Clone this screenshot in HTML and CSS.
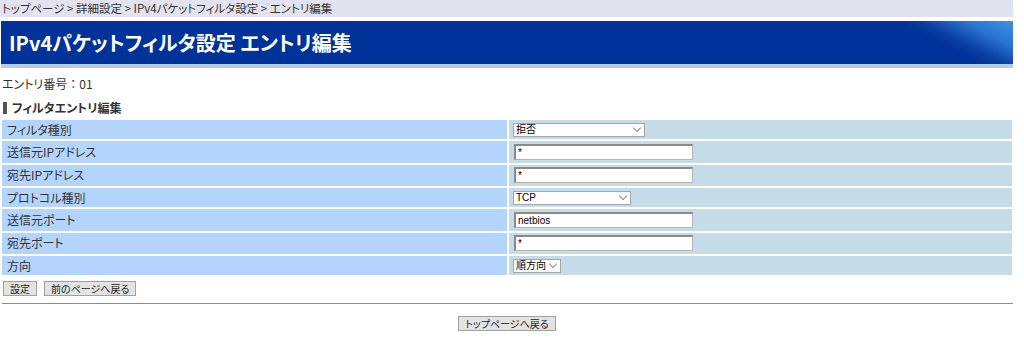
FILE: index.html
```html
<!DOCTYPE html>
<html lang="ja">
  <head>
    <meta charset="UTF-8">
    <title>IPv4パケットフィルタ設定 エントリ編集</title>
    <link rel="stylesheet" href="styles.css">
  </head>
  <body>
  <div class="page">
    <div class="breadcrumb">トップページ &gt; 詳細設定 &gt; IPv4パケットフィルタ設定 &gt; エントリ編集</div>
    <header class="title">
      <h1>IPv4パケットフィルタ設定 エントリ編集</h1>
    </header>

    <p class="entry-no">エントリ番号<span class="colon">：</span>01</p>
    <h2 class="section">フィルタエントリ編集</h2>

    <table class="form">
      <tr class="row-sel">
        <th>フィルタ種別</th>
        <td><span class="sel sel-wide"><select><option>拒否</option></select></span></td>
      </tr>
      <tr class="row-txt">
        <th>送信元IPアドレス</th>
        <td><input type="text" value="*"></td>
      </tr>
      <tr class="row-txt">
        <th>宛先IPアドレス</th>
        <td><input type="text" value="*"></td>
      </tr>
      <tr class="row-sel">
        <th>プロトコル種別</th>
        <td><span class="sel sel-mid"><select><option>TCP</option></select></span></td>
      </tr>
      <tr class="row-txt">
        <th>送信元ポート</th>
        <td><input type="text" value="netbios"></td>
      </tr>
      <tr class="row-txt">
        <th>宛先ポート</th>
        <td><input type="text" value="*"></td>
      </tr>
      <tr class="row-sel">
        <th>方向</th>
        <td><span class="sel sel-small"><select><option>順方向</option></select></span></td>
      </tr>
    </table>

    <div class="actions">
      <button class="btn">設定</button>
      <button class="btn">前のページへ戻る</button>
    </div>
    <hr class="rule">
    <div class="bottom">
      <button class="btn">トップページへ戻る</button>
    </div>
  </div>
  </body>
</html>
```

FILE: styles.css
```css
html, body {
  margin: 0;
  background: #fff;
}
body {
  font-family: "Noto Sans CJK JP", "Noto Sans", sans-serif;
  font-feature-settings: "palt";
  font-size: 12px;
  color: #333;
}
.page {
  width: 1014px;
}
.breadcrumb {
  width: 1013px;
  height: 17px;
  line-height: 17px;
  padding-left: 2px;
  box-sizing: border-box;
  background-color: #e3e3ef;
  font-size: 11.5px;
  color: #333;
}
.title {
  margin: 4px 0 0 1px;
  width: 1012px;
  height: 43px;
  background: linear-gradient(207deg, #3d93e8 0%, #2a74d2 4.5%, #0a3fa2 8.5%, #003399 10.5%);
  border-bottom: 4px solid #b6cde0;
}
.title h1 {
  margin: 0;
  padding-left: 8px;
  line-height: 43px;
  font-size: 20px;
  font-weight: 700;
  color: #fff;
}
.entry-no {
  margin: 9px 0 0 2px;
  line-height: 14px;
  font-size: 12px;
}
.colon {
  font-feature-settings: normal;
}
.section {
  margin: 11px 0 0 3px;
  padding-left: 5px;
  border-left: 4px solid #555;
  line-height: 12px;
  font-size: 12px;
  font-weight: 700;
  color: #333;
}
.form {
  margin-top: 4px;
  width: 1014px;
  border-collapse: separate;
  border-spacing: 2px;
}
.form th {
  width: 500px;
  padding: 0 0 0 5px;
  text-align: left;
  font-weight: 400;
  line-height: 14px;
  background-color: #b3d4fc;
}
.form td {
  padding: 0 0 0 4px;
  background-color: #c6dbe8;
}
.row-sel th,
.row-sel td {
  height: 19px;
}
.row-txt th,
.row-txt td {
  height: 21.5px;
}
.form input {
  display: block;
  box-sizing: border-box;
  width: 179px;
  height: 16px;
  margin-left: 1px;
  padding: 0 0 0 2px;
  border: 1px solid #b5b5b5;
  border-top: 2px solid #8a8a8a;
  border-left: 2px solid #8a8a8a;
  background: #fff;
  font-family: "Liberation Sans", sans-serif;
  font-size: 10px;
  color: #000;
}
.sel {
  position: relative;
  display: block;
  height: 14px;
}
.sel-wide {
  width: 132px;
}
.sel-mid {
  width: 118px;
}
.sel-small {
  width: 48px;
}
.sel select {
  appearance: none;
  -webkit-appearance: none;
  display: block;
  box-sizing: border-box;
  width: 100%;
  height: 14px;
  margin: 0;
  padding: 0 0 0 2px;
  border: 1px solid #a5a5a5;
  border-radius: 0;
  background: #fff;
  font-family: "Liberation Sans", "Noto Sans CJK JP", sans-serif;
  font-size: 10px;
  line-height: 12px;
  color: #000;
}
.sel::after {
  content: "";
  position: absolute;
  right: 5px;
  top: 2px;
  width: 5px;
  height: 5px;
  border-right: 1px solid #909090;
  border-bottom: 1px solid #909090;
  transform: rotate(45deg);
}
.actions {
  display: flex;
  gap: 7px;
  margin: 4px 0 0 3px;
}
.btn {
  height: 15px;
  margin: 0;
  padding: 0 6px;
  border: 1px solid #a0a0a0;
  border-radius: 0;
  background: #e3e3e3;
  font-family: "Noto Sans CJK JP", sans-serif;
  font-feature-settings: "palt";
  font-size: 10px;
  line-height: 13px;
  color: #222;
}
.rule {
  margin: 7px 0 0 2px;
  width: 1011px;
  height: 0;
  border: 0;
  border-top: 1px solid #8c8c8c;
}
.bottom {
  display: flex;
  justify-content: center;
  margin-top: 12px;
}
```
